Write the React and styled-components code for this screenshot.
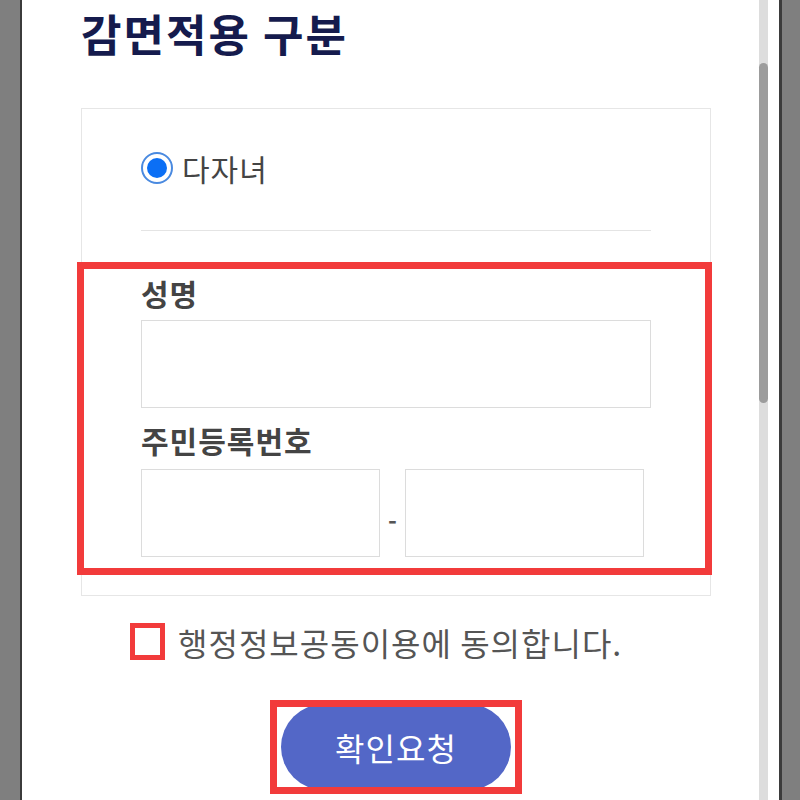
import React, { useState } from "react";
import styled, { createGlobalStyle } from "styled-components";

const GlobalStyle = createGlobalStyle`
  html, body {
    margin: 0;
    padding: 0;
    overflow: hidden;
    background: #ffffff;
  }
  body {
    font-family: "Noto Sans CJK KR", "Noto Sans", sans-serif;
  }
  * {
    box-sizing: border-box;
  }
`;

const Frame = styled.div`
  display: flex;
  width: 800px;
  height: 800px;
`;

const Bezel = styled.div`
  width: ${(p) => p.$width}px;
  background: #7f7f7f;
  ${(p) => (p.$side === "left" ? "border-right" : "border-left")}: ${(p) =>
    p.$line}px solid #3b3b3b;
  flex-shrink: 0;
`;

const Page = styled.main`
  width: 737px;
  background: #ffffff;
  padding-left: 59px;
  flex-shrink: 0;
`;

const ScrollTrack = styled.div`
  width: 9px;
  background: #dddddd;
  flex-shrink: 0;
`;

const ScrollThumb = styled.div`
  margin-top: 63px;
  height: 340px;
  background: #9c9c9c;
  border-radius: 5px;
`;

const Gutter = styled.div`
  width: 11px;
  background: #ffffff;
  flex-shrink: 0;
`;

const Title = styled.h1`
  margin: 0 0 44px;
  padding-top: 2px;
  height: 64px;
  font-size: 44px;
  line-height: 62px;
  font-weight: 700;
  color: #151b4d;
  letter-spacing: 2px;
`;

const Box = styled.section`
  width: 630px;
  border: 1px solid #e6e6e6;
  padding: 43px 0 20px;
`;

const Inner = styled.div`
  padding: 0 59px;
`;

const RadioRow = styled.label`
  display: flex;
  align-items: center;
  gap: 9px;
  height: 32px;
  font-size: 30px;
  letter-spacing: 1px;
  color: #444444;
  cursor: pointer;
`;

const RadioDot = styled.span`
  width: 32px;
  height: 32px;
  border-radius: 50%;
  border: 2px solid #4a8ae0;
  padding: 4px;
  background: #ffffff;
  display: flex;

  &::after {
    content: "";
    flex: 1;
    border-radius: 50%;
    background: ${(p) => (p.$checked ? "#0b6ff5" : "transparent")};
  }
`;

const Divider = styled.hr`
  margin: 46px 0 0;
  border: 0;
  border-top: 1px solid #e4e4e4;
`;

const Highlight = styled.div`
  margin: 31px -2px 0 -5px;
  border: 7px solid #f23b3b;
  padding: 4px 54px 11px 57px;
`;

const Label = styled.div`
  height: 40px;
  line-height: 40px;
  font-size: 30px;
  letter-spacing: 1px;
  font-weight: 700;
  color: #444444;
  margin-bottom: ${(p) => p.$bottom || 7}px;
  margin-top: ${(p) => p.$top || 0}px;
`;

const Input = styled.input`
  display: block;
  width: ${(p) => p.$width}px;
  height: 88px;
  border: 1px solid #dcdcdc;
  background: #ffffff;
  font-size: 24px;
  padding: 0 12px;
  outline: none;
`;

const RrnRow = styled.div`
  display: flex;
  align-items: center;
`;

const Dash = styled.span`
  width: 25px;
  text-align: center;
  font-size: 24px;
  font-weight: 700;
  color: #555555;
  padding-top: 10px;
`;

const AgreeRow = styled.label`
  display: flex;
  align-items: center;
  gap: 13px;
  margin: 27px 0 0 49px;
  height: 37px;
  font-size: 32px;
  letter-spacing: 1px;
  color: #555555;
  cursor: pointer;
`;

const CheckMark = styled.span`
  width: 35px;
  height: 37px;
  border: 5px solid #f23b3b;
  background: #ffffff;
  flex-shrink: 0;
`;

const ButtonArea = styled.div`
  display: flex;
  justify-content: center;
  width: 630px;
  margin-top: 40px;
`;

const ButtonFrame = styled.div`
  border: 7px solid #f23b3b;
  padding: 0 4px;
  height: 94px;
  overflow: hidden;
  display: flex;
  align-items: center;
`;

const SubmitButton = styled.button`
  width: 230px;
  height: 86px;
  border: 0;
  border-radius: 43px;
  background: #5367c7;
  color: #ffffff;
  font-family: inherit;
  font-size: 32px;
  letter-spacing: 1px;
  cursor: pointer;
`;

const App = () => {
  const [agree, setAgree] = useState(false);

  return (
    <>
      <GlobalStyle />
      <Frame>
        <Bezel $side="left" $width={22} $line={2} />
        <Page>
          <Title>감면적용 구분</Title>
          <Box>
            <Inner>
              <RadioRow>
                <RadioDot $checked />
                다자녀
              </RadioRow>
              <Divider />
            </Inner>
            <Highlight>
              <Label>성명</Label>
              <Input $width={510} />
              <Label $top={12} $bottom={9}>
                주민등록번호
              </Label>
              <RrnRow>
                <Input $width={239} />
                <Dash>-</Dash>
                <Input $width={239} />
              </RrnRow>
            </Highlight>
          </Box>
          <AgreeRow onClick={() => setAgree(!agree)}>
            <CheckMark />
            행정정보공동이용에 동의합니다.
          </AgreeRow>
          <ButtonArea>
            <ButtonFrame>
              <SubmitButton>확인요청</SubmitButton>
            </ButtonFrame>
          </ButtonArea>
        </Page>
        <ScrollTrack>
          <ScrollThumb />
        </ScrollTrack>
        <Gutter />
        <Bezel $side="right" $width={21} $line={3} />
      </Frame>
    </>
  );
};

export default App;
